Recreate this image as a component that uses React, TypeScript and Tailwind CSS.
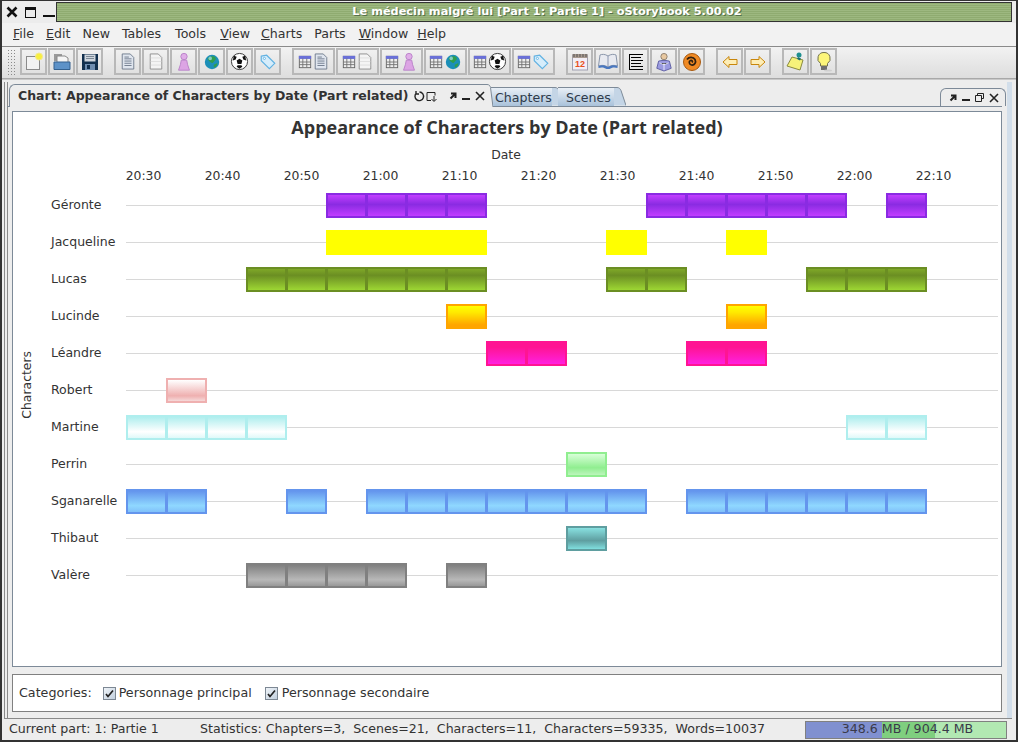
import React from 'react';

type Bar = [number, number];
interface Row { name: string; bars: Bar[]; cell: string; }

// bars are [first column, number of cells], a column is 40px wide
const rows: Row[] = [
  { name: 'Géronte', bars: [[5, 4], [13, 5], [19, 1]], cell: 'border-[#8a2be2] bg-[linear-gradient(180deg,#c23eff,#8a2be2_45%,#c23eff)]' },
  { name: 'Jacqueline', bars: [[5, 4], [12, 1], [15, 1]], cell: 'border-[#ffff00] bg-[#ffff00]' },
  { name: 'Lucas', bars: [[3, 6], [12, 2], [17, 3]], cell: 'border-[#6b8e23] bg-[linear-gradient(180deg,#7fa828,#6b8e23_30%,#9dd633)]' },
  { name: 'Lucinde', bars: [[8, 1], [15, 1]], cell: 'border-[#ffa500] bg-[linear-gradient(180deg,#ffff00,#ffea00_30%,#ffa500_90%)]' },
  { name: 'Léandre', bars: [[9, 2], [14, 2]], cell: 'border-[#ff1493] bg-[linear-gradient(180deg,#ff1493,#ff1493_20%,#ff20e0)]' },
  { name: 'Robert', bars: [[1, 1]], cell: 'border-[#efb0b0] bg-[linear-gradient(180deg,#ffffff,#efb0b0_75%,#f5d8d8)]' },
  { name: 'Martine', bars: [[0, 4], [18, 2]], cell: 'border-[#afeeee] bg-[linear-gradient(180deg,#afeeee,#ffffff_70%,#dff9f9)]' },
  { name: 'Perrin', bars: [[11, 1]], cell: 'border-[#90ee90] bg-[linear-gradient(180deg,#d8ffd8,#90ee90_65%,#bcf5bc)]' },
  { name: 'Sganarelle', bars: [[0, 2], [4, 1], [6, 7], [14, 6]], cell: 'border-[#6495ed] bg-[linear-gradient(180deg,#6495ed,#8fd8ff_70%,#80c0fa)]' },
  { name: 'Thibaut', bars: [[11, 1]], cell: 'border-[#5f9ea0] bg-[linear-gradient(180deg,#88e0e0,#5f9ea0_60%,#80dede)]' },
  { name: 'Valère', bars: [[3, 4], [8, 1]], cell: 'border-[#808080] bg-[linear-gradient(180deg,#808080,#b8b8b8_70%,#989898)]' },
];

const ticks = ['20:30', '20:40', '20:50', '21:00', '21:10', '21:20', '21:30', '21:40', '21:50', '22:00', '22:10'];

const Doc = ({ lines }: { lines?: boolean }) => (
  <svg width="16" height="19" viewBox="0 0 18 20">
    <path d="M2.500 1.500h9l4 4v13h-13z" fill={lines ? '#dfe5ee' : '#f4f4f4'} stroke={lines ? '#6a7688' : '#8a8a8a'} />
    {lines && <path d="M5 7h8M5 9.500h8M5 12h8M5 14.500h8M5 5h5" stroke="#6a7688" />}
    {!lines && <path d="M3 6h12M3 10h12M3 14h12" stroke="#dddddd" />}
  </svg>
);
const Person = () => (
  <svg width="18" height="20" viewBox="0 0 18 22">
    <circle cx="9" cy="5" r="3.500" fill="#e0aee8" stroke="#b880c8" />
    <path d="M6 9h6l1 5 2 6H3l2-6z" fill="#dca4e4" stroke="#b880c8" />
  </svg>
);
const Globe = () => (
  <svg width="18" height="18" viewBox="0 0 20 20">
    <circle cx="10" cy="10" r="8" fill="#1c8fb8" />
    <path d="M5 6c3-3 7-3 9-1 1 3-2 4-3 6-2 0-5-2-6-5zM12 13l4-2c0 3-2 5-4 5z" fill="#2f9e4c" />
    <circle cx="8" cy="6" r="2" fill="#a8e0f0" opacity=".7" />
  </svg>
);
const Ball = () => (
  <svg width="19" height="19" viewBox="0 0 20 20">
    <circle cx="10" cy="10" r="8.500" fill="#fff" stroke="#333" />
    <path d="M10 7l3 2-1 3.500H8L7 9zM4 4l3 1-1 3-3 1zM16 4l-3 1 1 3 3 1zM7 15.500l3 2 3-2-1-1.500H8z" fill="#111" />
  </svg>
);
const Tag = () => (
  <svg width="18" height="18" viewBox="0 0 20 20">
    <path d="M2.500 3.500l6-1 9 9-6 6-9-9z" fill="#d6edfb" stroke="#62b2e2" strokeWidth="1.300" />
    <circle cx="6" cy="6" r="1.200" fill="#fff" stroke="#62b2e2" />
  </svg>
);
const Table = () => (
  <svg width="14" height="14" viewBox="0 0 16 16">
    <rect x="1.500" y="1.500" width="13" height="13" fill="#eeeeee" stroke="#606060" />
    <rect x="1" y="1" width="14" height="3.500" fill="#6a70d8" />
    <path d="M1.500 8h13M1.500 11h13M5.500 4v10M10 4v10" stroke="#707070" />
  </svg>
);
const Save = () => (
  <svg width="18" height="18" viewBox="0 0 18 18">
    <path d="M1 1h16v16H1z" fill="#12304e" />
    <rect x="3.500" y="1.500" width="11" height="7" fill="#cfd6de" />
    <path d="M5 3.500h8M5 5.500h8" stroke="#7a8794" />
    <rect x="4" y="11" width="10" height="6" fill="#6e8db0" />
    <rect x="6" y="12" width="3" height="4" fill="#12304e" />
  </svg>
);
const Open = () => (
  <svg width="18" height="18" viewBox="0 0 18 18">
    <path d="M1 1h8v7H1z" fill="#9a9a9a" />
    <path d="M4 3h8l3 2v6H4z" fill="#f5f5f5" stroke="#8a8a8a" />
    <path d="M1 9h16v7.500H1z" fill="#5d92c8" stroke="#34618f" />
  </svg>
);
const New = () => (
  <svg width="20" height="20" viewBox="0 0 20 20">
    <rect x="2.500" y="4.500" width="13" height="13" fill="#f2f2f2" stroke="#8a8a8a" />
    <circle cx="15" cy="4.500" r="3.500" fill="#f7ef40" stroke="#f5e98a" />
  </svg>
);
const Calendar = () => (
  <svg width="20" height="20" viewBox="0 0 20 20">
    <rect x="2.500" y="3" width="15" height="15" fill="#f2eef6" stroke="#a0a0b0" />
    <rect x="2.500" y="2" width="15" height="4" fill="#a89a90" />
    <path d="M4 2v3M7 2v3M10 2v3M13 2v3M16 2v3" stroke="#555" />
    <text x="10" y="15" textAnchor="middle" fontSize="9" fontWeight="700" fill="#e8501c" fontFamily="Liberation Sans, sans-serif">12</text>
  </svg>
);
const Book = () => (
  <svg width="22" height="20" viewBox="0 0 22 20">
    <path d="M11 4C8 2 5 2 3 3L1.500 14c3-1 6-1 9.500 1 3.500-2 6.500-2 9.500-1L19 3c-2-1-5-1-8 1z" fill="#e8eaf0" stroke="#8a96aa" />
    <path d="M1.500 14c3-1 6-1 9.500 1 3.500-2 6.500-2 9.500-1v2c-3-1-6-.500-8 1h-3c-2-1.500-5-2-8-1z" fill="#4a78c0" />
    <path d="M11 4v11" stroke="#8a96b0" />
  </svg>
);
const List = () => (
  <svg width="16" height="18" viewBox="0 0 16 18">
    <path d="M1.500 1v16" stroke="#000" />
    <path d="M1 1.500h14M3 4.500h10M3 7.500h12M3 10.500h10M3 13.500h12M1 16.500h14" stroke="#000" strokeWidth="1.200" />
  </svg>
);
const Reader = () => (
  <svg width="18" height="20" viewBox="0 0 20 22">
    <circle cx="10" cy="5" r="3.500" fill="#e8c8a0" stroke="#8a7a6a" />
    <path d="M4 10c2-1 10-1 12 0l2 8-8 3-8-3z" fill="#9a9ae0" stroke="#5a5aa0" />
    <path d="M10 12v8M5 12l5 2 5-2" stroke="#f0f0ff" />
  </svg>
);
const Spiral = () => (
  <svg width="20" height="20" viewBox="0 0 20 20">
    <circle cx="10" cy="10" r="8.500" fill="#f08a24" stroke="#a85a10" />
    <path d="M10 10.500c1-1 0-2.500-1.500-2-2 .800-1.500 4 1 4.500 3 .500 5-2.500 3.500-5.500-1.500-2.500-6-3-8 0" fill="none" stroke="#302010" strokeWidth="1.700" />
  </svg>
);
const Arrow = ({ flip }: { flip?: boolean }) => (
  <svg width="16" height="14" viewBox="0 0 16 14" className={flip ? '-scale-x-100' : ''}>
    <path d="M1 7l6-5.500v3h8v5H7v3z" fill="#fdeeb8" stroke="#c8860c" />
  </svg>
);
const Note = () => (
  <svg width="22" height="22" viewBox="0 0 22 22">
    <path d="M7 6l11 3-3 10-13-4z" fill="#f6f27a" stroke="#8a8a40" />
    <circle cx="14" cy="4" r="2.500" fill="#1f8f8f" />
    <path d="M13 6l3 1.500-1 2-3-1.500z" fill="#1f6f6f" />
  </svg>
);
const Bulb = () => (
  <svg width="20" height="22" viewBox="0 0 20 22">
    <path d="M10 1.500a6 6 0 0 1 3.500 11V15h-7v-2.500A6 6 0 0 1 10 1.500z" fill="#fdf67a" stroke="#707050" />
    <rect x="7" y="15" width="6" height="4" fill="#707070" />
    <ellipse cx="14" cy="19.500" rx="4" ry="1" fill="#cfcfcf" />
  </svg>
);

const Btn = ({ wide, children }: { wide?: boolean; children: React.ReactNode }) => (
  <div className={`${wide ? 'w-[43px]' : 'w-[27px]'} h-[27px] flex items-center justify-center border-2 border-[#b8b8b8]`}>{children}</div>
);

const TableBtn = ({ children }: { children: React.ReactNode }) => (
  <Btn wide>
    <div className="flex items-center gap-px -mx-px">
      <Table />
      {children}
    </div>
  </Btn>
);

const Menu = ({ u, rest, className }: { u?: string; rest: string; className?: string }) => (
  <span className={className}>
    {u && <span className="underline">{u}</span>}
    {rest}
  </span>
);

const Check = () => (
  <span className="w-[13px] h-[13px] border border-[#7d8894] bg-[linear-gradient(135deg,#eef3f8,#c3d0de)] flex items-center justify-center">
    <svg width="9" height="9" viewBox="0 0 9 9">
      <path d="M1 5l2 2.500L8 1.500" fill="none" stroke="#222" strokeWidth="1.700" />
    </svg>
  </span>
);

const Slant = ({ fill, stroke }: { fill: string; stroke: string }) => (
  <svg width="12" height="19" viewBox="0 0 12 19" className="shrink-0">
    <path d="M0 0.500h3c2 0 3 1 4 3L12 18.500H0z" fill={fill} />
    <path d="M0 0.500h3c2 0 3 1 4 3L12 18.500" fill="none" stroke={stroke} />
  </svg>
);

const DockIcons = ({ restore }: { restore?: boolean }) => (
  <div className="flex items-center gap-[5px]">
    <svg width="8" height="8" viewBox="0 0 8 8"><path d="M2 1.500h4.500V6M6 2L1.500 6.500" fill="none" stroke="#222" strokeWidth="2" /></svg>
    <span className="w-2 h-[2px] bg-[#222] mt-[5px]" />
    {restore && (
      <svg width="9" height="10" viewBox="0 0 9 10"><path d="M2.500 2.500v-2h6v5h-2M.500 2.500h6v6h-6z" fill="none" stroke="#222" /></svg>
    )}
    <svg width="10" height="10" viewBox="0 0 10 10"><path d="M1 1l8 8M9 1L1 9" stroke="#222" strokeWidth="1.600" /></svg>
  </div>
);

export default function App() {
  return (
    <div className="w-[1018px] h-[742px] overflow-hidden bg-[#ededed] text-[#333333] flex flex-col border-l-2 border-t border-b-2 border-r-2 border-[#333] font-['DejaVu_Sans',sans-serif] text-[12.400px]">
      {/* window title bar */}
      <div className="h-[22px] shrink-0 flex items-center bg-[#ececec]">
        <svg width="12" height="12" viewBox="0 0 12 12" className="ml-[4px]"><path d="M1.500 1.500l9 9M10.500 1.500l-9 9" stroke="#111" strokeWidth="2.600" /></svg>
        <div className="ml-[7px] w-[11px] h-[11px] border border-[#111] border-t-[3px]" />
        <div className="ml-[7px] w-[12px] h-[2px] bg-[#111] mt-[8px]" />
        <div className="ml-[1px] flex-1 mr-[4px] h-[20px] border border-[#333] pl-[26px] flex items-center justify-center text-white font-bold text-[11.300px] [text-shadow:1px_1px_0_#56704a] bg-[repeating-linear-gradient(180deg,#8fab70_0px,#8fab70_1px,#9db880_1px,#9db880_2px)]">
          Le médecin malgré lui [Part 1: Partie 1] - oStorybook 5.00.02
        </div>
      </div>

      {/* menu */}
      <div className="h-[24px] shrink-0 flex items-center gap-[12px] pl-[11px] text-[12.600px] bg-[#f2f2f2] border-b border-[#8a8a8a]">
        <Menu u="F" rest="ile" />
        <Menu u="E" rest="dit" />
        <Menu rest="New" />
        <Menu rest="Tables" />
        <Menu rest="Tools" className="ml-[2px]" />
        <Menu u="V" rest="iew" className="ml-[2px]" />
        <Menu u="C" rest="harts" className="-ml-px" />
        <Menu rest="Parts" />
        <Menu u="W" rest="indow" className="ml-px" />
        <Menu u="H" rest="elp" className="-ml-[3px]" />
      </div>

      {/* toolbar */}
      <div className="h-[32px] shrink-0 flex items-center pl-[5px] pb-[2px] bg-[linear-gradient(180deg,#f2f2f2,#dddddd)] border-b border-[#a8a8a8]">
        <div className="w-[10px] h-[26px] mr-[3px] bg-[radial-gradient(#8a8a8a_1px,transparent_1px)] bg-[length:3px_3px]" />
        <div className="flex gap-px">
          <Btn><New /></Btn>
          <Btn><Open /></Btn>
          <Btn><Save /></Btn>
        </div>
        <div className="flex gap-px ml-[11px]">
          <Btn><Doc lines /></Btn>
          <Btn><Doc /></Btn>
          <Btn><Person /></Btn>
          <Btn><Globe /></Btn>
          <Btn><Ball /></Btn>
          <Btn><Tag /></Btn>
        </div>
        <div className="flex gap-px ml-[11px]">
          <TableBtn><Doc lines /></TableBtn>
          <TableBtn><Doc /></TableBtn>
          <TableBtn><Person /></TableBtn>
          <TableBtn><Globe /></TableBtn>
          <TableBtn><Ball /></TableBtn>
          <TableBtn><Tag /></TableBtn>
        </div>
        <div className="flex gap-px ml-[11px]">
          <Btn><Calendar /></Btn>
          <Btn><Book /></Btn>
          <Btn><List /></Btn>
          <Btn><Reader /></Btn>
          <Btn><Spiral /></Btn>
        </div>
        <div className="flex gap-px ml-[11px]">
          <Btn><Arrow /></Btn>
          <Btn><Arrow flip /></Btn>
        </div>
        <div className="flex gap-px ml-[11px]">
          <Btn><Note /></Btn>
          <Btn><Bulb /></Btn>
        </div>
      </div>

      {/* dock area */}
      <div className="flex-1 min-h-0 flex flex-col pl-[2px] pr-[4px] pt-[2px] border-t border-[#c8c8c8] bg-[#ededed]">
        <div className="flex-1 min-h-0 flex flex-col border-l border-r-[5px] border-[#8a8a8a] border-r-[#d2deea] pl-[2px] pr-[5px] bg-no-repeat bg-[linear-gradient(90deg,transparent_2px,#8a8a8a_2px,#8a8a8a_3px,transparent_3px)]">
          {/* tabs */}
          <div className="h-[25px] shrink-0 flex items-end pl-[2px] border-b border-[#7d8a98]">
            <div className="h-[23px] w-[478px] flex items-center border-l border-t border-[#7d8a98] rounded-tl-[6px] bg-[#ededed] pl-[8px] pr-[1px] -mb-px relative z-10">
              <span className="font-bold text-[12.500px] text-[#333] whitespace-nowrap">Chart: Appearance of Characters by Date (Part related)</span>
              <div className="flex items-center gap-[1px] ml-[5px]">
                <svg width="11" height="11" viewBox="0 0 11 11"><path d="M2.500 2A4.300 4.300 0 1 0 5.500 1M2 0v3h3" fill="none" stroke="#222" strokeWidth="1.400" /></svg>
                <svg width="11" height="11" viewBox="0 0 11 11"><path d="M5 9.500H1V1.500h8v3M8 5v5M5.500 8L8 10.500 10.500 8" fill="none" stroke="#222" /></svg>
              </div>
              <div className="ml-auto mr-[1px]"><DockIcons /></div>
            </div>
            <svg width="6" height="23" viewBox="0 0 6 23" className="-mb-px relative z-10 shrink-0"><path d="M0 0.500c2 0 3 1 3.500 3L6 23H0z" fill="#ededed" /><path d="M0 0.500c2 0 3 1 3.500 3L6 23" fill="none" stroke="#7d8a98" /></svg>
            <div className="flex items-end h-[19px] -ml-[2px]">
              <div className="h-[19px] pl-[4px] pt-[1px] text-[12.600px] text-[#2e3a4a] border-t border-[#7d8a98] bg-[linear-gradient(180deg,#e8eff6,#a9c2da)]">Chapters</div>
              <Slant fill="#c4d5e6" stroke="#7d8a98" />
              <div className="h-[19px] -ml-[6px] pl-[8px] pr-[3px] pt-[1px] text-[12.600px] text-[#2e3a4a] border-t border-[#7d8a98] bg-[linear-gradient(180deg,#e8eff6,#a9c2da)]">Scenes</div>
              <Slant fill="#c4d5e6" stroke="#7d8a98" />
            </div>
            <div className="ml-auto -mr-[4px] w-[66px] h-[18px] flex items-center justify-end pr-[6px] border-l border-t border-r border-[#7d8a98] rounded-t-[6px] bg-[#ededed]">
              <DockIcons restore />
            </div>
          </div>

          {/* chart panel */}
          <div className="h-[556px] shrink-0 ml-[5px] mt-[4px] border border-[#7d8a98] bg-white flex flex-col">
            <div className="h-[30px] flex items-center justify-center font-['Open_Sans',sans-serif] font-bold text-[18px]">Appearance of Characters by Date (Part related)</div>
            <div className="h-[15px] mt-[6px] flex items-center justify-center pr-[2px]">Date</div>
            <div className="h-[20px] mt-[4px] flex pl-[91px]">
              {ticks.map(t => (
                <div key={t} className="w-[79px] text-center">{t}</div>
              ))}
            </div>
            <div className="flex">
              <div className="w-[38px] flex items-center justify-center">
                <span className="[writing-mode:vertical-rl] rotate-180 mt-[-12px] mr-[9px]">Characters</span>
              </div>
              <div className="flex flex-col">
                {rows.map(row => (
                  <div key={row.name} className="h-[37px] flex items-center">
                    <div className="w-[75px] text-[12.500px] whitespace-nowrap">{row.name}</div>
                    <div className="relative w-[872px] h-[25px]">
                      <div className="absolute left-0 right-0 top-[12px] h-px bg-[#d8d8d8]" />
                      <div className="relative grid grid-cols-[repeat(22,40px)] h-[25px]">
                        {row.bars.flatMap(([start, n]) =>
                          Array.from({ length: n }, (_, i) => (
                            <div
                              key={start + i}
                              className={`w-[41px] h-[25px] border-2 ${row.cell}`}
                              style={{ gridColumnStart: start + i + 1, gridRowStart: 1 }}
                            />
                          ))
                        )}
                      </div>
                    </div>
                  </div>
                ))}
              </div>
            </div>
          </div>

          {/* categories */}
          <div className="h-[38px] shrink-0 ml-[5px] mt-[7px] border border-[#808080] bg-white flex items-center pl-[6px] text-[12.700px]">
            <span>Categories:</span>
            <span className="ml-[11px]"><Check /></span>
            <span className="ml-[3px]">Personnage principal</span>
            <span className="ml-[13px]"><Check /></span>
            <span className="ml-[4px]">Personnage secondaire</span>
          </div>
          <div className="h-[3px] shrink-0" />
        </div>

        {/* status bar */}
        <div className="h-[22px] shrink-0 flex items-center border-t border-[#8a8a8a] pl-[5px] text-[12.600px] whitespace-pre">
          <span className="w-[191px]">Current part: 1: Partie 1</span>
          <span>Statistics: Chapters=3,  Scenes=21,  Characters=11,  Characters=59335,  Words=10037</span>
          <div className="ml-auto mr-[5px] w-[202px] h-[18px] border border-[#808080] pl-[3px] flex items-center justify-center bg-[linear-gradient(90deg,#8090d0_0,#8090d0_38%,#7fcf7f_38%,#7fcf7f_64.500%,#b2e8b2_64.500%)] text-[#3a3a4a]">
            348.6 MB / 904.4 MB
          </div>
        </div>
      </div>
    </div>
  );
}
